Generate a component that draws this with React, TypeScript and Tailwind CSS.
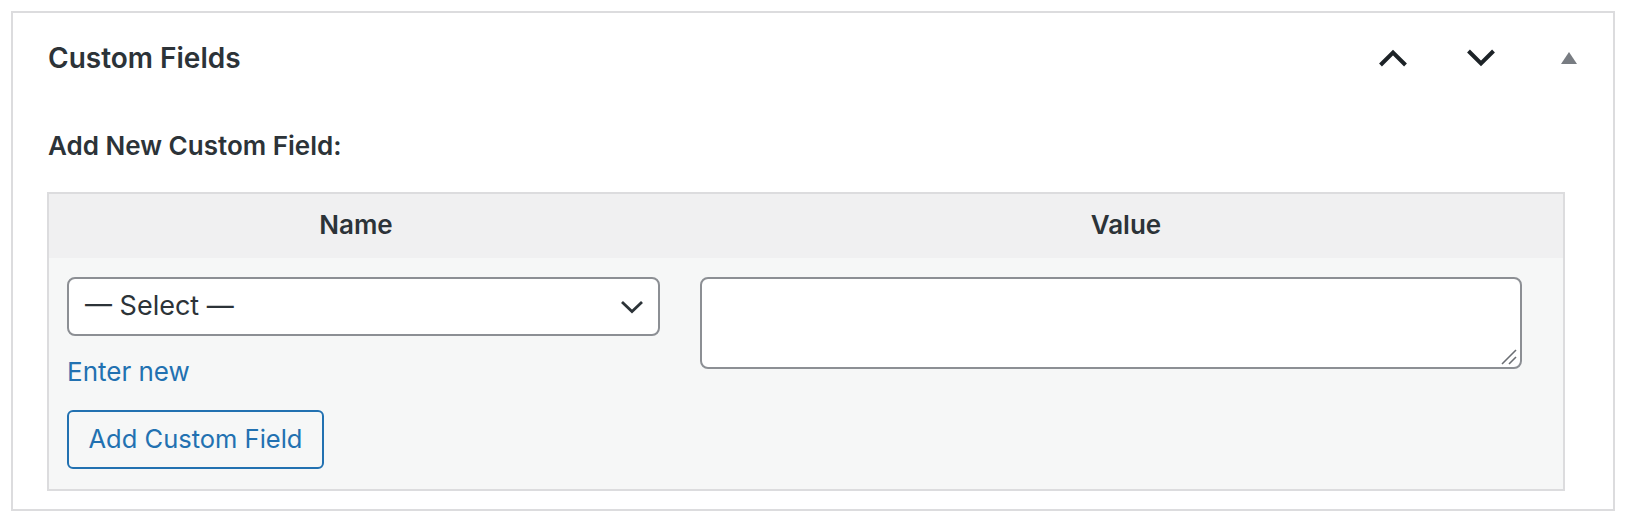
import React from "react";

const font = { fontFamily: "Inter, 'Noto Sans', 'Liberation Sans', sans-serif" };

function ChevronUp() {
  return (
    <svg width="30" height="18" viewBox="0 0 30 18" fill="none">
      <path d="M2.5 16 L15 3.5 L27.5 16" stroke="#1d2327" strokeWidth="4" strokeLinejoin="miter" />
    </svg>
  );
}

function ChevronDown() {
  return (
    <svg width="30" height="18" viewBox="0 0 30 18" fill="none">
      <path d="M2.5 2 L15 14.5 L27.5 2" stroke="#1d2327" strokeWidth="4" strokeLinejoin="miter" />
    </svg>
  );
}

function TriangleUp() {
  return (
    <svg width="16" height="12" viewBox="0 0 16 12">
      <polygon points="8,0 16,12 0,12" fill="#787c82" />
    </svg>
  );
}

function SelectChevron() {
  return (
    <svg width="24" height="14" viewBox="0 0 24 14" fill="none">
      <path d="M2 2 L12 11.5 L22 2" stroke="#2c3338" strokeWidth="2.8" />
    </svg>
  );
}

function ResizeGrip() {
  return (
    <svg width="18" height="18" viewBox="0 0 18 18" fill="none">
      <path d="M2 16 L16 2" stroke="#6b6e73" strokeWidth="1.6" />
      <path d="M9 16 L16 9" stroke="#6b6e73" strokeWidth="1.6" />
    </svg>
  );
}

export default function App() {
  return (
    <div className="min-h-[520px] bg-white pl-[11px] pt-[11px]" style={font}>
      <div className="flex h-[500px] w-[1604px] flex-col border-2 border-[#dcdcde] bg-white">
        {/* postbox header */}
        <div className="flex h-[89px] items-center justify-between pl-[35px]">
          <h2 className="text-[28px] font-semibold leading-[36px] text-[#2c3338]">Custom Fields</h2>
          <div className="flex">
            <button className="flex h-[72px] w-[88px] items-center justify-center" aria-label="Move up">
              <ChevronUp />
            </button>
            <button className="flex h-[72px] w-[88px] items-center justify-center" aria-label="Move down">
              <ChevronDown />
            </button>
            <button className="flex h-[72px] w-[88px] items-center justify-center" aria-label="Toggle panel">
              <TriangleUp />
            </button>
          </div>
        </div>

        <p className="ml-[35px] mt-[26px] text-[26px] font-semibold leading-[36px] text-[#2c3338]">
          Add New Custom Field:
        </p>

        {/* new meta table */}
        <div className="ml-[34px] mt-[28px] w-[1518px] border-2 border-[#dcdcde]">
          <div className="flex h-[64px] bg-[#f0f0f1] pb-[4px] text-[26px] font-semibold text-[#2c3338]">
            <div className="flex w-[631px] items-center justify-center pr-[17px]">Name</div>
            <div className="flex flex-1 items-center justify-center pl-[9px]">Value</div>
          </div>
          <div className="flex bg-[#f6f7f7] pb-[20px] pt-[19px]">
            <div className="flex w-[631px] flex-col items-start pl-[18px]">
              <div className="flex h-[59px] w-[593px] items-center justify-between rounded-[8px] border-2 border-[#8c8f94] bg-white pl-[16px] pr-[14px] text-[27px] text-[#2c3338]">
                <span>— Select —</span>
                <SelectChevron />
              </div>
              <a className="mt-[18px] text-[26px] leading-[36px] text-[#2271b1]" href="#">
                Enter new
              </a>
              <button className="mt-[20px] flex h-[59px] w-[257px] items-center justify-center rounded-[6px] border-2 border-[#2271b1] bg-[#f6f7f7] text-[25.5px] text-[#2271b1]">
                Add Custom Field
              </button>
            </div>
            <div className="pl-[20px]">
              <div className="relative">
                <textarea className="block h-[92px] w-[822px] resize-none rounded-[8px] border-2 border-[#8c8f94] bg-white" />
                <span className="pointer-events-none absolute bottom-[3px] right-[4px] flex">
                  <ResizeGrip />
                </span>
              </div>
            </div>
          </div>
        </div>
      </div>
    </div>
  );
}
